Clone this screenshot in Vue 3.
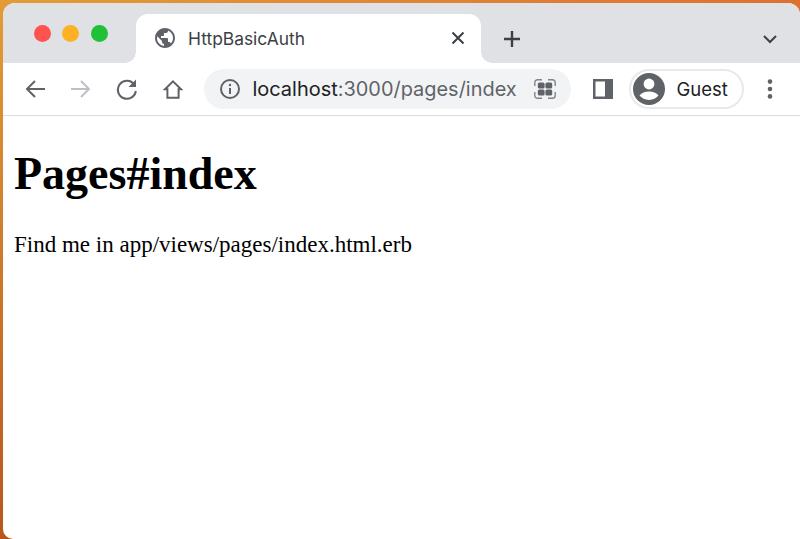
<script setup>
const lights = ['#ff5350', '#fdb225', '#20c136']
</script>

<template>
  <div class="desktop">
    <div class="window">
      <header class="strip">
        <div class="lights">
          <span v-for="c in lights" :key="c" class="light" :style="{ background: c }"></span>
        </div>
        <div class="tab">
          <svg class="globe" width="20" height="20" viewBox="2 2 20 20">
            <path fill="#5f6368" d="M12 2C6.48 2 2 6.48 2 12s4.48 10 10 10 10-4.48 10-10S17.52 2 12 2zm-1 17.93c-3.95-.49-7-3.85-7-7.93 0-.62.08-1.21.21-1.79L9 15v1c0 1.1.9 2 2 2v1.93zm6.9-2.54c-.26-.81-1-1.39-1.9-1.39h-1v-3c0-.55-.45-1-1-1H8v-2h2c.55 0 1-.45 1-1V7h2c1.1 0 2-.9 2-2v-.41c2.93 1.19 5 4.06 5 7.41 0 2.08-.8 3.97-2.1 5.39z" />
          </svg>
          <span class="tab-title">HttpBasicAuth</span>
          <svg class="close" width="14" height="14" viewBox="0 0 14 14">
            <path d="M1.5 1.5 12.5 12.5M12.5 1.5 1.5 12.5" stroke="#3c4043" stroke-width="2" fill="none" />
          </svg>
        </div>
        <svg class="plus" width="18" height="18" viewBox="0 0 18 18">
          <path d="M9 1V17M1 9H17" stroke="#3c4043" stroke-width="2.4" fill="none" />
        </svg>
        <svg class="chevron" width="14" height="9" viewBox="0 0 14 9">
          <path d="M1 1 7 7 13 1" stroke="#3c4043" stroke-width="2" fill="none" />
        </svg>
      </header>

      <nav class="toolbar">
        <span class="nav-btn">
          <svg width="20" height="18" viewBox="0 0 20 18">
            <path d="M20 9H2M10 1 2 9 10 17" stroke="#5f6368" stroke-width="2" fill="none" />
          </svg>
        </span>
        <span class="nav-btn">
          <svg width="20" height="18" viewBox="0 0 20 18">
            <path d="M0 9H18M10 1 18 9 10 17" stroke="#bdc1c6" stroke-width="2" fill="none" />
          </svg>
        </span>
        <span class="nav-btn">
          <svg width="22" height="22" viewBox="0 0 22 22">
            <path d="M18.2 6.5A9 9 0 1 0 19.8 13" stroke="#5f6368" stroke-width="2.1" fill="none" />
            <path d="M20 1.5V9H12.5Z" fill="#5f6368" />
          </svg>
        </span>
        <span class="nav-btn">
          <svg width="20" height="19" viewBox="0 0 20 19">
            <path d="M10 1.4 18 9.2H15.6V17.8H4.4V9.2H2Z" stroke="#5f6368" stroke-width="2" fill="none" stroke-linejoin="miter" />
          </svg>
        </span>

        <div class="omnibox">
          <svg width="20" height="20" viewBox="0 0 20 20">
            <circle cx="10" cy="10" r="9" stroke="#5f6368" stroke-width="2" fill="none" />
            <path d="M10 9V15" stroke="#5f6368" stroke-width="2" />
            <circle cx="10" cy="6" r="1.2" fill="#5f6368" />
          </svg>
          <span class="url"><span class="host">localhost</span>:3000/pages/index</span>
          <svg class="apps" width="22" height="20" viewBox="0 0 22 20">
            <path d="M.8 7V3.5A2.7 2.7 0 0 1 3.5 .8H8M14 .8H18.5A2.7 2.7 0 0 1 21.2 3.5V7M21.2 13V16.5A2.7 2.7 0 0 1 18.5 19.2H14M8 19.2H3.5A2.7 2.7 0 0 1 .8 16.5V13" stroke="#80868b" stroke-width="1.4" fill="none" />
            <rect x="3.8" y="3.4" width="6.8" height="6.2" rx="1.6" fill="#5f6368" />
            <rect x="11.4" y="3.4" width="6.8" height="6.2" rx="1.6" fill="#5f6368" />
            <rect x="3.8" y="10.4" width="6.8" height="6.2" rx="1.6" fill="#5f6368" />
            <rect x="11.4" y="10.4" width="6.8" height="6.2" rx="1.6" fill="#5f6368" />
          </svg>
        </div>

        <svg class="panel" width="20" height="20" viewBox="0 0 20 20">
          <path fill-rule="evenodd" d="M0 0H20V20H0ZM2.5 2.5V17.5H12V2.5Z" fill="#5f6368" />
        </svg>

        <div class="profile">
          <svg width="32" height="32" viewBox="0 0 32 32">
            <circle cx="16" cy="16" r="16" fill="#5f6368" />
            <circle cx="16" cy="11" r="5.4" fill="#fff" />
            <path d="M6.5 22.6C8.5 19.6 12 18.4 16 18.4 20 18.4 23.5 19.6 25.5 22.6 23.3 25.4 19.9 27 16 27 12.1 27 8.7 25.4 6.5 22.6Z" fill="#fff" />
          </svg>
          <span class="guest">Guest</span>
        </div>

        <svg class="dots" width="6" height="20" viewBox="0 0 6 20">
          <circle cx="3" cy="2.6" r="2.3" fill="#5f6368" />
          <circle cx="3" cy="10" r="2.3" fill="#5f6368" />
          <circle cx="3" cy="17.4" r="2.3" fill="#5f6368" />
        </svg>
      </nav>

      <main class="page">
        <h1>Pages#index</h1>
        <p>Find me in app/views/pages/index.html.erb</p>
      </main>
    </div>
  </div>
</template>

<style scoped>
.desktop {
  width: 800px;
  height: 539px;
  box-sizing: border-box;
  padding: 3px 0 0 3px;
  overflow: hidden;
  background:
    linear-gradient(to bottom, rgba(185, 86, 30, 0), #b9561e),
    linear-gradient(to right, #e29c38, #de7032);
}
.window {
  height: 100%;
  display: flex;
  flex-direction: column;
  background: #fff;
  border-radius: 12px 12px 0 10px;
  overflow: hidden;
}
.strip {
  height: 60px;
  flex: none;
  display: flex;
  align-items: flex-start;
  background: #dfe1e5;
  box-sizing: border-box;
  padding-top: 11px;
}
.lights {
  display: flex;
  gap: 11.7px;
  margin: 11px 0 0 30.5px;
  width: 102.5px;
}
.light {
  width: 17px;
  height: 17px;
  border-radius: 50%;
  flex: none;
}
.tab {
  position: relative;
  width: 345px;
  height: 49px;
  background: #fff;
  border-radius: 12px 12px 0 0;
  display: flex;
  align-items: center;
  box-sizing: border-box;
  padding: 0 16px 1px 19px;
}
.tab::before,
.tab::after {
  content: '';
  position: absolute;
  bottom: 0;
  width: 11px;
  height: 11px;
}
.tab::before {
  left: -11px;
  background: radial-gradient(circle at 0 0, #dfe1e5 10.5px, #fff 11px);
}
.tab::after {
  right: -11px;
  background: radial-gradient(circle at 100% 0, #dfe1e5 10.5px, #fff 11px);
}
.tab-title {
  margin-left: 13px;
  flex: 1;
  font: 17.4px "Inter", "Liberation Sans", sans-serif;
  color: #3c4043;
}
.plus {
  margin: 16px 0 0 22px;
}
.chevron {
  margin: 21px 0 0 241.5px;
}
.toolbar {
  height: 52px;
  flex: none;
  display: flex;
  align-items: center;
  box-sizing: border-box;
  padding: 0 0 0 8.5px;
  position: relative;
  background: #fff;
}
.nav-btn {
  width: 46px;
  height: 40px;
  display: flex;
  align-items: center;
  justify-content: center;
  flex: none;
}
.omnibox {
  margin-left: 8px;
  width: 367.5px;
  height: 40px;
  border-radius: 20px;
  background: #f1f3f4;
  display: flex;
  align-items: center;
  box-sizing: border-box;
  padding: 0 15px 0 16px;
  flex: none;
}
.url {
  margin-left: 13px;
  flex: 1;
  font: 19.95px "Inter", "Liberation Sans", sans-serif;
  color: #5f6368;
  white-space: nowrap;
}
.host {
  color: #202124;
}
.panel {
  margin-left: 21.5px;
  flex: none;
}
.profile {
  margin-left: 16px;
  width: 115px;
  height: 40px;
  box-sizing: border-box;
  border: 2px solid #e8e9eb;
  border-radius: 20px;
  display: flex;
  align-items: center;
  padding-left: 2px;
  flex: none;
}
.guest {
  margin-left: 12px;
  font: 18.5px "Inter", "Liberation Sans", sans-serif;
  color: #202124;
}
.dots {
  margin-left: 23px;
  flex: none;
}
.page {
  flex: 1;
  border-top: 1.5px solid #dadce0;
  padding: 0 11px;
  font-family: "Liberation Serif", "Times New Roman", serif;
  color: #000;
}
h1 {
  margin: 30px 0 0;
  font-size: 46px;
  line-height: 55px;
  font-weight: 700;
}
p {
  margin: 30px 0 0;
  font-size: 23px;
  line-height: 28px;
}
</style>
